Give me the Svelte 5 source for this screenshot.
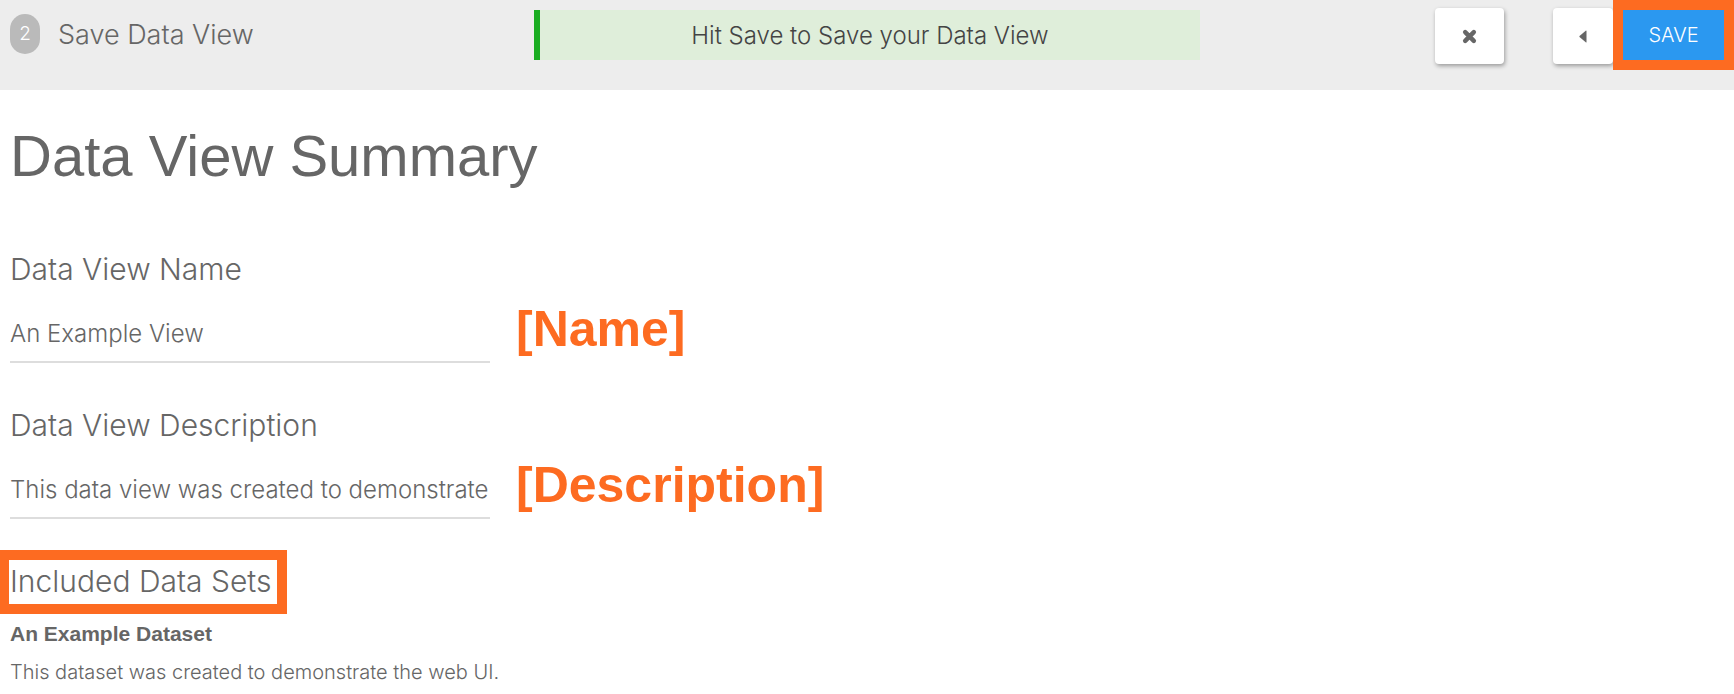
<script>
  let name = $state('An Example View');
  let description = $state('This data view was created to demonstrate');
  const dataSets = [
    { title: 'An Example Dataset', text: 'This dataset was created to demonstrate the web UI.' }
  ];
</script>

<header>
  <div class="step">
    <span class="badge">2</span>
    <span class="step-title">Save Data View</span>
  </div>
  <p class="hint">Hit Save to Save your Data View</p>
  <div class="actions">
    <button class="tool close" aria-label="Close">
      <svg width="15" height="15" viewBox="0 0 16 16" aria-hidden="true">
        <path d="M3.4 3.4 L12.6 12.6 M12.6 3.4 L3.4 12.6" stroke="#666" stroke-width="4.8" stroke-linecap="round" />
      </svg>
    </button>
    <button class="tool back" aria-label="Back">
      <svg width="8" height="13" viewBox="0 0 8 13" aria-hidden="true">
        <path d="M7 0.5 Q7.5 0.5 7.5 1 V12 Q7.5 12.5 7 12.5 L0.5 6.9 Q0.2 6.5 0.5 6.1 Z" fill="#666" />
      </svg>
    </button>
    <div class="mark save-mark"><button class="save">SAVE</button></div>
  </div>
</header>

<main>
  <h1>Data View Summary</h1>

  <section class="field">
    <label for="view-name">Data View Name</label>
    <div class="entry">
      <input id="view-name" type="text" bind:value={name} />
      <strong class="note">[Name]</strong>
    </div>
  </section>

  <section class="field">
    <label for="view-description">Data View Description</label>
    <div class="entry">
      <input id="view-description" type="text" bind:value={description} />
      <strong class="note">[Description]</strong>
    </div>
  </section>

  <section class="sets">
    <h2 class="mark">Included Data Sets</h2>
    {#each dataSets as set}
      <h3>{set.title}</h3>
      <p>{set.text}</p>
    {/each}
  </section>
</main>

<style>
  :global(body) {
    margin: 0;
    background: #fff;
    color: #666;
    font-family: Inter, 'Liberation Sans', sans-serif;
    font-weight: 300;
  }

  header {
    display: grid;
    grid-template-columns: 4fr 5fr 4fr;
    align-items: start;
    min-height: 90px;
    background: #ededed;
  }

  .step {
    display: flex;
    align-items: flex-start;
    gap: 18px;
    padding: 14px 0 0 10px;
  }

  .badge {
    width: 30px;
    border-radius: 15px;
    background: #bababa;
    color: #fff;
    font-size: 19px;
    line-height: 40px;
    text-align: center;
  }

  .step-title {
    font-size: 27px;
    line-height: 42px;
  }

  .hint {
    margin: 10px 0 0;
    border-left: 6px solid #1aad21;
    padding-top: 2px;
    background: #dfeeda;
    color: #444;
    font-size: 24px;
    line-height: 48px;
    text-align: center;
  }

  .actions {
    display: flex;
    justify-content: flex-end;
    align-items: flex-start;
  }

  button {
    display: flex;
    align-items: center;
    justify-content: center;
    border: 0;
    padding: 0;
    font: inherit;
    cursor: pointer;
  }

  .tool {
    height: 56px;
    margin-top: 8px;
    border-radius: 4px;
    background: #fff;
    box-shadow: 1px 2px 4px rgba(0, 0, 0, 0.35);
  }

  .close {
    width: 69px;
    margin-right: 49px;
  }

  .back {
    width: 60px;
  }

  .mark {
    border: 10px solid #fd6b21;
  }

  .save-mark {
    position: relative;
  }

  .save {
    width: 101px;
    height: 50px;
    background: #2b98f0;
    color: #fff;
    font-size: 20px;
  }

  main {
    padding: 34px 10px 0;
  }

  h1 {
    margin: 0 0 50px;
    font-family: 'Liberation Sans', sans-serif;
    font-size: 58px;
    font-weight: 400;
    line-height: 64px;
  }

  .field {
    padding: 6px 0 30px;
  }

  label {
    display: block;
    font-size: 30px;
    line-height: 50px;
  }

  .entry {
    display: flex;
    align-items: center;
    gap: 26px;
    height: 70px;
  }

  input {
    box-sizing: border-box;
    width: 480px;
    height: 52px;
    margin-top: 16px;
    border: 0;
    border-bottom: 2px solid #ddd;
    padding: 0 0 6px;
    background: none;
    color: inherit;
    font: inherit;
    font-size: 24px;
    outline: 0;
  }

  .note {
    color: #fd6b21;
    font-family: 'Liberation Sans', sans-serif;
    font-size: 50px;
    font-weight: 700;
    line-height: 56px;
  }

  h2 {
    width: fit-content;
    margin: 0 0 1px -11px;
    padding: 0 5px 2px 1px;
    font-size: 30px;
    font-weight: 300;
    line-height: 42px;
  }

  h3 {
    margin: 0;
    font-family: 'Liberation Sans', sans-serif;
    font-size: 21px;
    font-weight: 700;
    line-height: 38px;
  }

  p {
    margin: 0;
    font-size: 20px;
    line-height: 38px;
  }
</style>
